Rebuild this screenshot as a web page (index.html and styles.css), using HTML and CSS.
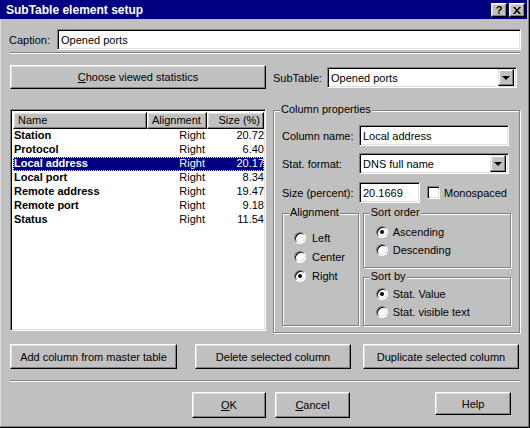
FILE: index.html
```html
<!DOCTYPE html>
<html>
<head>
<meta charset="utf-8">
<link rel="stylesheet" href="styles.css">
</head>
<body>
<div class="window">
  <div class="titlebar">
    <span class="title">SubTable element setup</span>
    <div class="tb-btns">
      <span class="tb-btn help-q">?</span>
      <span class="tb-btn"><svg width="8" height="7" viewBox="0 0 8 7"><path d="M0 0h2l2 2.4L6 0h2L5 3.5 8 7H6L4 4.6 2 7H0l3-3.5z" fill="#000"/></svg></span>
    </div>
  </div>
  <div class="content">
    <div class="caption-row">
      <span class="lbl caption-lbl">Caption:</span>
      <div class="field caption-field">Opened ports</div>
    </div>
    <div class="sep sep-top"></div>
    <div class="main">
      <div class="left">
        <div class="btn choose"><span><u>C</u>hoose viewed statistics</span></div>
        <div class="list">
          <div class="list-head">
            <div class="hcell">Name</div>
            <div class="hcell">Alignment</div>
            <div class="hcell right">Size (%)</div>
          </div>
          <div class="row"><span class="c-name">Station</span><span class="c-al">Right</span><span class="c-sz">20.72</span></div>
          <div class="row"><span class="c-name">Protocol</span><span class="c-al">Right</span><span class="c-sz">6.40</span></div>
          <div class="row selected"><span class="c-name">Local address</span><span class="c-al">Right</span><span class="c-sz">20.17</span></div>
          <div class="row"><span class="c-name">Local port</span><span class="c-al">Right</span><span class="c-sz">8.34</span></div>
          <div class="row"><span class="c-name">Remote address</span><span class="c-al">Right</span><span class="c-sz">19.47</span></div>
          <div class="row"><span class="c-name">Remote port</span><span class="c-al">Right</span><span class="c-sz">9.18</span></div>
          <div class="row"><span class="c-name">Status</span><span class="c-al">Right</span><span class="c-sz">11.54</span></div>
        </div>
      </div>
      <div class="right">
        <div class="subtable-row">
          <span class="lbl subtable-lbl">SubTable:</span>
          <div class="combo subtable-combo"><span class="combo-text">Opened ports</span><span class="arrow-btn"><span class="tri"></span></span></div>
        </div>
        <div class="group colprops">
          <span class="group-title">Column properties</span>
          <div class="form-row">
            <span class="lbl form-lbl">Column name:</span>
            <div class="field form-field">Local address</div>
          </div>
          <div class="form-row r2">
            <span class="lbl form-lbl">Stat. format:</span>
            <div class="combo form-field"><span class="combo-text">DNS full name</span><span class="arrow-btn"><span class="tri"></span></span></div>
          </div>
          <div class="form-row r3">
            <span class="lbl form-lbl">Size (percent):</span>
            <div class="field size-field">20.1669</div>
            <span class="checkbox"></span>
            <span class="lbl check-lbl">Monospaced</span>
          </div>
          <div class="subgroups">
            <div class="group align-group">
              <span class="group-title">Alignment</span>
              <div class="radio-row ar"><span class="radio"></span><span class="lbl">Left</span></div>
              <div class="radio-row ar"><span class="radio"></span><span class="lbl">Center</span></div>
              <div class="radio-row ar"><span class="radio checked"></span><span class="lbl">Right</span></div>
            </div>
            <div class="sort-col">
              <div class="group sortorder-group">
                <span class="group-title">Sort order</span>
                <div class="radio-row sr"><span class="radio checked"></span><span class="lbl">Ascending</span></div>
                <div class="radio-row sr"><span class="radio"></span><span class="lbl">Descending</span></div>
              </div>
              <div class="group sortby-group">
                <span class="group-title">Sort by</span>
                <div class="radio-row sr"><span class="radio checked"></span><span class="lbl">Stat. Value</span></div>
                <div class="radio-row sr"><span class="radio"></span><span class="lbl">Stat. visible text</span></div>
              </div>
            </div>
          </div>
        </div>
      </div>
    </div>
    <div class="actions">
      <div class="btn act add">Add column from master table</div>
      <div class="btn act del">Delete selected column</div>
      <div class="btn act dup">Duplicate selected column</div>
    </div>
    <div class="sep sep-bottom"></div>
    <div class="footer">
      <div class="btn fbtn ok"><span><u>O</u>K</span></div>
      <div class="btn fbtn cancel"><span><u>C</u>ancel</span></div>
      <div class="btn fbtn helpbtn">Help</div>
    </div>
  </div>
</div>
</body>
</html>
```
FILE: styles.css
```css
* { box-sizing: border-box; }
body {
  margin: 0;
  font-family: "Liberation Sans", Arial, sans-serif;
  font-size: 11px;
  color: #000;
  background: #c0c0c0;
}
.window {
  width: 530px;
  height: 428px;
  background: #c0c0c0;
  padding: 0 3px 2px 0;
  display: flex;
  flex-direction: column;
  box-shadow: inset -1px -1px #000, inset -2px -2px #808080, inset 1px 0 #dfdfdf;
}
.titlebar {
  height: 19px;
  background: #000080;
  display: flex;
  align-items: center;
  justify-content: space-between;
  flex: none;
}
.title {
  color: #fff;
  font-weight: bold;
  font-size: 12px;
  padding-left: 6px;
  padding-top: 1px;
}
.tb-btns {
  display: flex;
  gap: 2px;
  padding-right: 2px;
  padding-top: 1px;
}
.tb-btn {
  width: 16px;
  height: 14px;
  background: #c0c0c0;
  border: 1px solid;
  border-color: #fff #000 #000 #fff;
  box-shadow: inset -1px -1px #808080, inset 1px 1px #dfdfdf;
  display: flex;
  align-items: center;
  justify-content: center;
}
.help-q {
  font-weight: bold;
  font-size: 11px;
  line-height: 12px;
}
.content {
  flex: 1;
  padding: 0 0 0 10px;
  display: flex;
  flex-direction: column;
}
.lbl { white-space: nowrap; }
.caption-row {
  margin-top: 10px;
  display: flex;
  align-items: center;
}
.caption-lbl {
  width: 48px;
  margin-left: -1px;
}
.field, .combo {
  height: 21px;
  background: #fff;
  border: 1px solid;
  border-color: #808080 #fff #fff #808080;
  box-shadow: inset 1px 1px #000, inset -1px -1px #dfdfdf;
  padding: 0 0 0 3px;
  display: flex;
  align-items: center;
  white-space: nowrap;
}
.caption-field { flex: 1; margin-right: 6px; }
.sep {
  height: 2px;
  border-top: 1px solid #808080;
  border-bottom: 1px solid #fff;
}
.sep-top { margin-top: 2px; margin-right: 7px; }
.main {
  margin-top: 11px;
  display: grid;
  grid-template-columns: 256px 1fr;
  column-gap: 7px;
}
.btn {
  background: #c0c0c0;
  border: 1px solid;
  border-color: #fff #000 #000 #fff;
  box-shadow: inset -1px -1px #808080, inset 1px 1px #dfdfdf;
  display: flex;
  align-items: center;
  justify-content: center;
  white-space: nowrap;
}
.choose { height: 24px; }
.list {
  margin-top: 20px;
  height: 222px;
  background: #fff;
  border: 1px solid;
  border-color: #808080 #fff #fff #808080;
  box-shadow: inset 1px 1px #000, inset -1px -1px #dfdfdf;
  padding: 2px 1px 1px 2px;
}
.list-head, .row {
  display: grid;
  grid-template-columns: 134px 60px 1fr;
}
.list-head { height: 17px; }
.hcell {
  background: #c0c0c0;
  border: 1px solid;
  border-color: #fff #000 #000 #fff;
  box-shadow: inset -1px -1px #808080, inset 1px 1px #dfdfdf;
  padding-left: 4px;
  line-height: 14px;
}
.hcell.right { text-align: right; padding-right: 3px; padding-left: 0; }
.row {
  height: 14px;
  line-height: 13px;
}
.c-name { font-weight: bold; padding-left: 1px; }
.c-al { text-align: right; padding-right: 2px; }
.c-sz { text-align: right; padding-right: 0; }
.row.selected {
  background: #000080;
  color: #fff;
  outline: 1px dotted #ffff80;
  outline-offset: -1px;
}
.subtable-row {
  margin-top: 2px;
  display: flex;
  align-items: center;
}
.subtable-lbl { width: 54px; }
.subtable-combo { width: 190px; }
.combo { padding-right: 2px; }
.combo-text { flex: 1; }
.arrow-btn {
  width: 16px;
  height: 17px;
  background: #c0c0c0;
  border: 1px solid;
  border-color: #dfdfdf #000 #000 #dfdfdf;
  box-shadow: inset -1px -1px #808080, inset 1px 1px #fff;
  display: flex;
  align-items: center;
  justify-content: center;
}
.tri {
  width: 0;
  height: 0;
  border-left: 4px solid transparent;
  border-right: 4px solid transparent;
  border-top: 4px solid #000;
  margin-top: 1px;
}
.group {
  position: relative;
  border: 1px solid #808080;
  box-shadow: inset 1px 1px #fff, 1px 1px #fff;
}
.group-title {
  position: absolute;
  top: -8px;
  left: 6px;
  padding: 0 1px;
  background: #c0c0c0;
  line-height: 13px;
  white-space: nowrap;
}
.colprops {
  margin-top: 22px;
  height: 223px;
  width: 247px;
  padding: 14px 8px 0 8px;
}
.form-row {
  display: flex;
  align-items: center;
}
.r2 { margin-top: 7px; }
.r3 { margin-top: 8px; }
.form-lbl { width: 77px; }
.form-field { width: 150px; }
.size-field { width: 61px; }
.checkbox {
  width: 13px;
  height: 13px;
  margin-left: 7px;
  background: #fff;
  border: 1px solid;
  border-color: #808080 #fff #fff #808080;
  box-shadow: inset 1px 1px #000, inset -1px -1px #dfdfdf;
}
.check-lbl { margin-left: 4px; }
.subgroups {
  margin-top: 10px;
  display: flex;
}
.align-group {
  width: 77px;
  height: 113px;
  padding: 14px 0 0 11px;
}
.sort-col {
  margin-left: 4px;
  width: 149px;
  display: flex;
  flex-direction: column;
}
.sortorder-group {
  height: 55px;
  padding: 9px 0 0 12px;
}
.sortby-group {
  margin-top: 9px;
  height: 49px;
  padding: 7px 0 0 12px;
}
.radio-row {
  display: flex;
  align-items: center;
}
.radio-row.ar { height: 19px; gap: 6px; }
.radio-row.sr { height: 18px; gap: 5px; }
.radio {
  position: relative;
  flex: none;
  width: 12px;
  height: 12px;
  border-radius: 50%;
  background: #fff;
  border: 1px solid;
  border-color: #808080 #fff #fff #808080;
  box-shadow: inset 1px 1px #000, inset -1px -1px #dfdfdf;
}
.radio.checked::after {
  content: "";
  position: absolute;
  left: 3px;
  top: 3px;
  width: 4px;
  height: 4px;
  border-radius: 50%;
  background: #000;
}
.actions {
  margin-top: 11px;
  display: flex;
}
.act { height: 25px; }
.add { width: 167px; }
.del { width: 156px; margin-left: 18px; }
.dup { width: 156px; margin-left: 12px; }
.sep-bottom { margin-top: 11px; margin-right: 7px; }
.footer {
  margin-top: 10px;
  display: flex;
  align-items: flex-start;
}
.fbtn { height: 26px; }
.ok { width: 74px; margin-left: 182px; }
.cancel { width: 75px; margin-left: 9px; }
.helpbtn { width: 76px; height: 23px; margin-left: 85px; }
```
